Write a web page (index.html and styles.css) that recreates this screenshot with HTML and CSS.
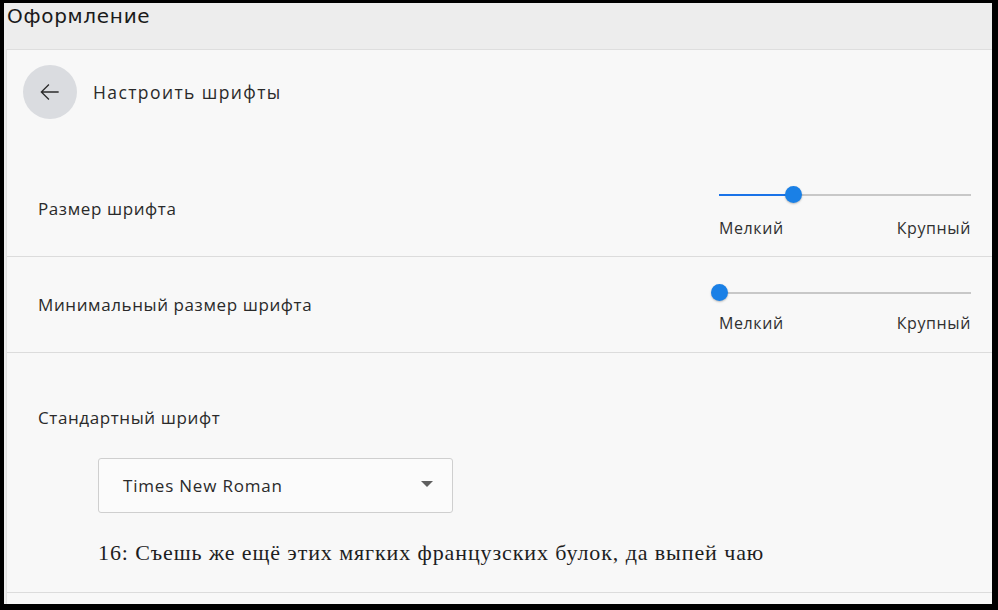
FILE: index.html
```html
<!DOCTYPE html>
<html lang="ru">
<head>
<meta charset="utf-8">
<link rel="stylesheet" href="styles.css">
</head>
<body>
<div class="frame">
  <div class="page">
    <div class="title">Оформление</div>
    <div class="card">
      <div class="subhead">
        <div class="back">
          <svg width="26" height="26" viewBox="0 0 24 24"><path d="M20 12H5M11 5l-7 7 7 7" fill="none" stroke="#2b2b2b" stroke-width="1.2"/></svg>
        </div>
        <div class="subtitle">Настроить шрифты</div>
      </div>
      <div class="row">
        <div class="label">Размер шрифта</div>
        <div class="slider">
          <div class="track"><div class="fill" style="width:74px"></div><div class="knob" style="left:74px"></div></div>
          <div class="ends"><span>Мелкий</span><span>Крупный</span></div>
        </div>
      </div>
      <div class="row">
        <div class="label">Минимальный размер шрифта</div>
        <div class="slider">
          <div class="track"><div class="fill" style="width:0px"></div><div class="knob" style="left:0px"></div></div>
          <div class="ends"><span>Мелкий</span><span>Крупный</span></div>
        </div>
      </div>
      <div class="section">
        <div class="label">Стандартный шрифт</div>
        <div class="select">
          <span>Times New Roman</span>
          <span class="caret"></span>
        </div>
        <div class="sample">16: Съешь же ещё этих мягких французских булок, да выпей чаю</div>
      </div>
    </div>
  </div>
</div>
</body>
</html>
```
FILE: styles.css
```css
* { box-sizing: border-box; }
html, body { margin: 0; padding: 0; }
body { background: #000; width: 998px; height: 610px; overflow: hidden; }
.frame { padding: 3px 6px 6px 4px; height: 610px; }
.page {
  background: #ededed;
  height: 601px;
  font-family: "Open Sans", "Noto Sans", sans-serif;
  color: #262626;
  display: flex;
  flex-direction: column;
}
.title {
  font-family: "DejaVu Sans", sans-serif;
  font-size: 20px;
  letter-spacing: 0.7px;
  color: #1a1a1a;
  height: 46px;
  padding: 0 0 0 3px;
  line-height: 26px;
}
.card {
  flex: 1;
  margin-left: 2px;
  background: #f8f8f8;
  border-top: 1px solid #dedede;
  border-left: 1px solid #e2e2e2;
  display: flex;
  flex-direction: column;
}
.subhead {
  display: flex;
  gap: 16px;
  padding: 15px 0 0 16px;
  height: 111px;
  align-items: flex-start;
}
.back {
  width: 54px; height: 54px;
  border-radius: 50%;
  background: #dadce0;
  display: flex; align-items: center; justify-content: center;
}
.subtitle { font-size: 17.5px; line-height: 54px; letter-spacing: 1.4px; color: #2a2a2a; }
.row {
  height: 96px;
  border-bottom: 1px solid #dcdcdc;
  display: flex;
  align-items: center;
  justify-content: space-between;
  padding: 0 21px 0 31px;
}
.label { font-size: 17px; color: #2a2a2a; letter-spacing: 0.6px; }
.slider { width: 252px; padding-top: 6px; }
.track { position: relative; height: 2px; background: #c8c8c8; margin: 8px 0 0 0; }
.fill { position: absolute; left: 0; top: 0; height: 2px; background: #1a73e8; }
.knob {
  position: absolute; top: -8px; margin-left: -8px;
  width: 17px; height: 17px; border-radius: 50%;
  background: #1a80e6;
  box-shadow: 0 1px 2px rgba(0,0,0,0.25);
}
.ends { display: flex; justify-content: space-between; font-size: 16px; letter-spacing: 0.6px; color: #303030; margin-top: 22px; line-height: 20px; }
.row + .row .slider { margin-top: 0; padding-top: 8px; }
.row + .row .ends { margin-top: 19px; }
.section {
  flex: 1;
  border-bottom: 1px solid #dcdcdc;
  padding: 53px 0 0 31px;
  margin-bottom: 11px;
}
.select {
  margin: 29px 0 0 60px;
  width: 355px; height: 55px;
  border: 1px solid #cfcfcf;
  border-radius: 3px;
  background: #fbfbfb;
  display: flex; align-items: center; justify-content: space-between;
  padding: 0 19px 0 24px;
  font-size: 17px; letter-spacing: 0.8px; color: #2a2a2a;
}
.caret {
  width: 0; height: 0;
  border-left: 6px solid transparent; border-right: 6px solid transparent;
  border-top: 6px solid #5f5f5f;
  margin-top: -4px;
}
.sample {
  margin: 27px 0 0 60px;
  font-family: "Liberation Serif", "Times New Roman", serif;
  font-size: 22px;
  letter-spacing: 0.9px;
  color: #1e1e1e;
}
```
